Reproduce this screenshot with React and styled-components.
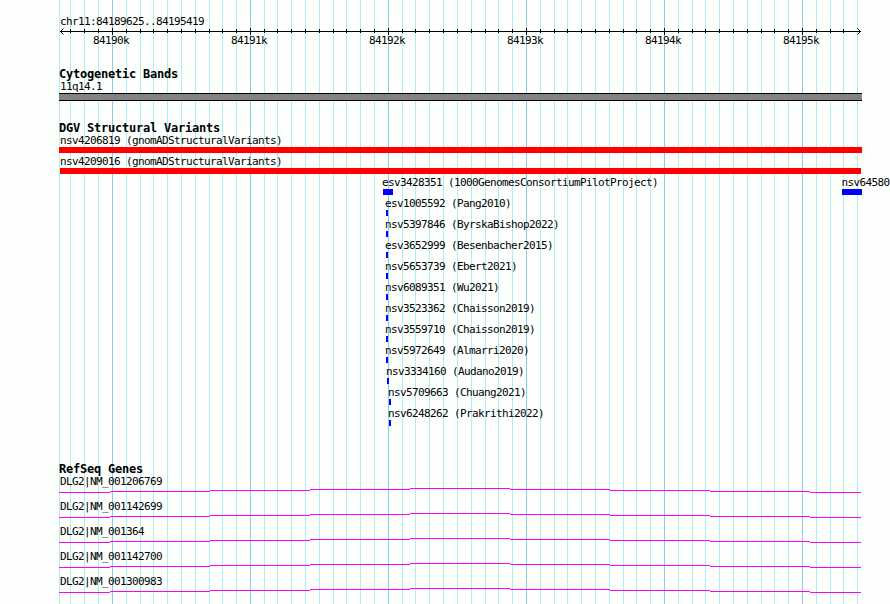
import React from 'react'
import styled, { createGlobalStyle } from 'styled-components'

const majors = [112, 250, 388, 526, 664, 802]
const minors = [
  70, 84, 98,
  126, 140, 153, 167, 181, 195, 209, 222, 236,
  264, 277, 291, 305, 319, 333, 346, 360, 374,
  402, 415, 429, 443, 457, 471, 485, 498, 512,
  540, 554, 567, 581, 595, 609, 623, 636, 650,
  678, 692, 705, 719, 733, 747, 761, 774, 788,
  816, 830, 843, 857
]

// each row holds the features that fit next to each other, offsets are from the panel's left edge
const variantRows = [
  [{ name: 'nsv4206819 (gnomADStructuralVariants)', start: 0, length: 803, label: 1, color: '#ff0000' }],
  [{ name: 'nsv4209016 (gnomADStructuralVariants)', start: 1, length: 801, label: 0, color: '#ff0000' }],
  [
    { name: 'esv3428351 (1000GenomesConsortiumPilotProject)', start: 324, length: 10 },
    { name: 'nsv64580', start: 783, length: 20, label: -0.5 }
  ],
  [{ name: 'esv1005592 (Pang2010)', start: 327, length: 2 }],
  [{ name: 'nsv5397846 (ByrskaBishop2022)', start: 327, length: 2 }],
  [{ name: 'esv3652999 (Besenbacher2015)', start: 327, length: 2 }],
  [{ name: 'nsv5653739 (Ebert2021)', start: 327, length: 2 }],
  [{ name: 'nsv6089351 (Wu2021)', start: 327, length: 2 }],
  [{ name: 'nsv3523362 (Chaisson2019)', start: 327, length: 2 }],
  [{ name: 'nsv3559710 (Chaisson2019)', start: 327, length: 2 }],
  [{ name: 'nsv5972649 (Almarri2020)', start: 327, length: 2 }],
  [{ name: 'nsv3334160 (Audano2019)', start: 328, length: 2 }],
  [{ name: 'nsv5709663 (Chuang2021)', start: 330, length: 2 }],
  [{ name: 'nsv6248262 (Prakrithi2022)', start: 330, length: 2 }]
]

const genes = ['NM_001206769', 'NM_001142699', 'NM_001364', 'NM_001142700', 'NM_001300983']

const GridLines = () => (
  <GridLayer width="890" height="604" shapeRendering="crispEdges">
    {[59, ...minors].map(x => (
      <rect key={x} x={x} y="0" width="1" height="604" fill="#afeeee" />
    ))}
    {majors.map(x => (
      <rect key={x} x={x} y="0" width="1" height="604" fill="#87ceeb" />
    ))}
  </GridLayer>
)

const Ruler = () => (
  <RulerAxis viewBox="59 27 803 8" width="803" height="8">
    <g shapeRendering="crispEdges">
      <rect x="60" y="31" width="801" height="1" />
      {minors.filter(x => x < 857).map(x => (
        <rect key={x} x={x} y="29" width="1" height="4" />
      ))}
      {majors.map(x => (
        <rect key={x} x={x} y="28" width="1" height="7" />
      ))}
    </g>
    <path d="M63.5 28.5L60.5 31.5L63.5 34.5M857.5 28.5L860.5 31.5L857.5 34.5" />
  </RulerAxis>
)

const Variant = ({ feature, previousEnd }) => (
  <Feature $gap={feature.start - previousEnd}>
    <FeatureLabel $shift={feature.label}>{feature.name}</FeatureLabel>
    <FeatureBar $length={feature.length} $color={feature.color} />
  </Feature>
)

const Gene = ({ name }) => (
  <GeneRow>
    <Label>DLG2|{name}</Label>
    <Intron viewBox="59 487 803 6" width="803" height="6" shapeRendering="crispEdges">
      <path d="M59 492.5H110M110 491.5H210M210 490.5H310M310 489.5H410M410 488.5H510M510 489.5H610M610 490.5H710M710 491.5H810M810 492.5H861" />
    </Intron>
  </GeneRow>
)

const App = () => (
  <Browser>
    <GlobalStyle />
    <GridLines />
    <Panel>
      <Overview>
        <Label>chr11:84189625..84195419</Label>
        <Ruler />
        <TickLabels>
          {majors.map((x, i) => (
            <span key={x}>{84190 + i}k</span>
          ))}
        </TickLabels>
      </Overview>
      <Track $height={54}>
        <TrackTitle>Cytogenetic Bands</TrackTitle>
        <Label>11q14.1</Label>
        <Band />
      </Track>
      <Track $height={341}>
        <TrackTitle>DGV Structural Variants</TrackTitle>
        {variantRows.map((row, i) => (
          <VariantRow key={i}>
            {row.map((feature, n) => (
              <Variant
                key={feature.name}
                feature={feature}
                previousEnd={n ? row[n - 1].start + row[n - 1].length : 0}
              />
            ))}
          </VariantRow>
        ))}
      </Track>
      <Track $height={141}>
        <TrackTitle>RefSeq Genes</TrackTitle>
        {genes.map(name => (
          <Gene key={name} name={name} />
        ))}
      </Track>
    </Panel>
  </Browser>
)

export default App

// Styles
const GlobalStyle = createGlobalStyle`
  body {
    margin: 0;
    background: #fdfffc;
  }
`

const Browser = styled.div`
  position: relative;
  width: 890px;
  height: 604px;
  overflow: hidden;
  background: #fdfffc;
  color: #000;
  font-family: 'DejaVu Sans Mono', monospace;
  font-size: 11px;
  line-height: 14px;
  letter-spacing: -0.622px;
  white-space: nowrap;
`

const GridLayer = styled.svg`
  position: absolute;
  inset: 0;
`

const Panel = styled.main`
  position: relative;
  padding: 15px 0 0 59px;
`

const Overview = styled.header`
  height: 53px;
`

const Label = styled.div`
  padding-left: 1px;
  height: 12px;
`

const RulerAxis = styled.svg`
  display: block;

  path {
    fill: none;
    stroke: #000;
  }
`

const TickLabels = styled.div`
  display: flex;
  gap: 102px;
  margin-top: -1px;
  padding-left: 34px;

  span {
    width: 36px;
  }
`

const Track = styled.section`
  height: ${({ $height }) => $height}px;
`

const TrackTitle = styled.h2`
  margin: 0;
  height: 12px;
  font-size: 12px;
  font-weight: bold;
  line-height: 13px;
  letter-spacing: -0.224px;
`

const Band = styled.div`
  box-sizing: border-box;
  width: 803px;
  height: 8px;
  margin-top: 1px;
  background: #848284;
  border: solid #000;
  border-width: 1px 0;
`

const VariantRow = styled.div`
  display: flex;
  height: 21px;
`

const Feature = styled.div`
  flex: none;
  margin-left: ${({ $gap }) => $gap}px;
`

// labels run past their bars without widening the feature
const FeatureLabel = styled.div`
  width: 0;
  height: 13px;
  text-indent: ${({ $shift = -1 }) => $shift}px;
`

const FeatureBar = styled.div`
  width: ${({ $length }) => $length}px;
  height: 6px;
  background: ${({ $color = '#0000ff' }) => $color};
`

const GeneRow = styled.div`
  height: 25px;
`

const Intron = styled.svg`
  display: block;

  path {
    fill: none;
    stroke: #ff00ff;
  }
`
